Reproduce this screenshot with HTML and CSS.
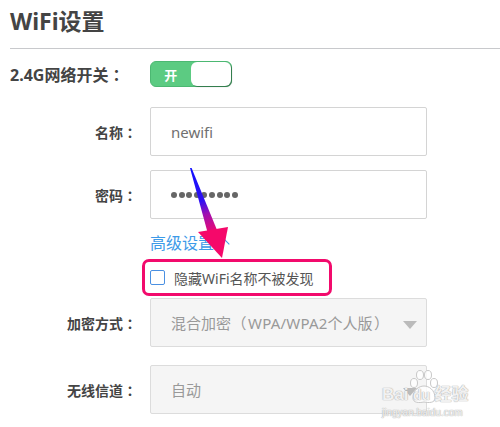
FILE: index.html
```html
<!DOCTYPE html>
<html lang="zh-CN">
<head>
<meta charset="utf-8">
<title>WiFi设置</title>
<link rel="stylesheet" href="styles.css">
</head>
<body>
<div class="page">
  <h1 class="title">WiFi设置</h1>
  <div class="row row-switch">
    <div class="label label-wide">2.4G网络开关<span class="punct" lang="zh-TW">：</span></div>
    <div class="switch"><span class="switch-on">开</span><span class="knob"></span></div>
  </div>
  <div class="row row-name">
    <div class="label">名称<span class="punct" lang="zh-TW">：</span></div>
    <div class="field">newifi</div>
  </div>
  <div class="row row-pwd">
    <div class="label">密码<span class="punct" lang="zh-TW">：</span></div>
    <div class="field"><span class="dots"><i></i><i></i><i></i><i></i><i></i><i></i><i></i><i></i><i></i></span></div>
  </div>
  <div class="row row-adv">
    <div class="label"></div>
    <a class="adv">高级设置<span class="chev"></span></a>
  </div>
  <div class="row row-hide">
    <div class="label"></div>
    <div class="highlight"><span class="check"></span><span class="hide-text">隐藏WiFi名称不被发现</span></div>
  </div>
  <div class="row row-enc">
    <div class="label">加密方式<span class="punct" lang="zh-TW">：</span></div>
    <div class="field select">混合加密<span class="paren paren-open">（</span><span class="latin">WPA/WPA2</span>个人版<span class="paren paren-close">）</span><span class="caret"></span></div>
  </div>
  <div class="row row-chan">
    <div class="label">无线信道<span class="punct" lang="zh-TW">：</span></div>
    <div class="field select">自动<span class="caret"></span></div>
  </div>

  <svg class="arrow" width="500" height="427" viewBox="0 0 500 427">
    <defs>
      <linearGradient id="g" gradientUnits="userSpaceOnUse" x1="190" y1="168" x2="214" y2="234">
        <stop offset="0" stop-color="#1010ff"/>
        <stop offset="0.5" stop-color="#3010f2"/>
        <stop offset="0.7" stop-color="#a010b0"/>
        <stop offset="1" stop-color="#f5086a"/>
      </linearGradient>
    </defs>
    <polygon points="190,168 191.6,168 217,230 208,234" fill="url(#g)"/>
    <polygon points="198,232 228,227 222,258" fill="#f5086a"/>
  </svg>

  <div class="watermark">
    <svg class="wm-paw" width="30" height="34" viewBox="0 0 30 34">
      <g fill="rgba(255,255,255,0.8)" stroke="#c8c8c8" stroke-width="1">
        <ellipse cx="5" cy="13" rx="3.5" ry="4.5"/>
        <ellipse cx="11" cy="5" rx="3.5" ry="4.5"/>
        <ellipse cx="19" cy="5" rx="3.5" ry="4.5"/>
        <ellipse cx="25" cy="13" rx="3.5" ry="4.5"/>
        <path d="M4 28 C4 20 10 16 15 16 C20 16 26 20 26 28 C26 33 20 33 15 32 C10 33 4 33 4 28 Z"/>
      </g>
    </svg>
    <span class="wm-logo">Bai<span class="wm-du">du</span>经验</span>
    <span class="wm-url">jingyan.baidu.com</span>
  </div>
</div>
</body>
</html>
```

FILE: styles.css
```css
html, body {
  margin: 0;
  padding: 0;
  background: #fff;
}
.page {
  position: relative;
  width: 500px;
  height: 427px;
  overflow: hidden;
  font-family: "Noto Sans", "Noto Sans CJK SC", sans-serif;
  color: #444;
}
.punct {
  font-family: "Noto Sans CJK TC", sans-serif;
}
.title {
  margin: 0 0 0 10px;
  padding: 6px 0 0 0;
  height: 49px;
  box-sizing: border-box;
  font-size: 23px;
  line-height: 30px;
  font-weight: bold;
  color: #444;
  border-bottom: 1px solid #c8c9cc;
}
.row {
  display: flex;
  align-items: center;
  gap: 13px;
}
.label {
  width: 137px;
  flex: none;
  text-align: right;
  font-size: 14px;
  font-weight: bold;
  color: #444;
}
.label-wide {
  text-align: left;
  padding-left: 10px;
  box-sizing: border-box;
  font-size: 16px;
  white-space: nowrap;
}
.row-switch { margin-top: 12px; height: 26px; }
.switch {
  width: 82px;
  height: 26px;
  box-sizing: border-box;
  border-radius: 6px;
  background: #5ccb82;
  border: 1px solid #4cb872;
  display: flex;
  align-items: center;
}
.switch-on {
  width: 40px;
  text-align: center;
  color: #fff;
  font-size: 13px;
  font-weight: bold;
}
.knob {
  margin-left: auto;
  width: 41px;
  height: 24px;
  background: #fff;
  border-radius: 6px;
  box-shadow: 1px 1px 1px rgba(0,0,0,0.35);
}
.field {
  width: 277px;
  height: 49px;
  box-sizing: border-box;
  border: 1px solid #d4d4d4;
  border-radius: 2px;
  padding-left: 20px;
  display: flex;
  align-items: center;
  font-size: 15px;
  color: #707070;
  background: #fff;
  white-space: nowrap;
}
.row-name { margin-top: 20px; }
.row-pwd { margin-top: 14px; }
.dots { display: flex; gap: 1.6px; }
.dots i {
  width: 6px;
  height: 6px;
  border-radius: 50%;
  background: #666;
  display: block;
}
.row-adv { margin-top: 10px; height: 26px; }
.adv {
  font-size: 16px;
  color: #3d9ae8;
  display: flex;
  align-items: center;
}
.chev {
  width: 7px;
  height: 7px;
  border-left: 1.5px solid #3d9ae8;
  border-top: 1.5px solid #3d9ae8;
  transform: rotate(45deg);
  margin-left: 6px;
  margin-top: 4px;
}
.row-hide { margin-top: 4px; gap: 5px; }
.highlight {
  width: 190px;
  height: 37px;
  box-sizing: border-box;
  border: 3px solid #f20a6c;
  border-radius: 7px;
  display: flex;
  align-items: center;
  padding-left: 5px;
  gap: 9px;
}
.check {
  width: 15px;
  height: 15px;
  box-sizing: border-box;
  border: 1px solid #4a90e2;
  border-radius: 2px;
  background: #fff;
}
.hide-text {
  font-size: 14px;
  color: #555;
}
.select {
  background: #f5f5f5;
  border-color: #dcdcdc;
  color: #999;
  font-size: 15px;
  position: relative;
}
.paren {
  display: inline-block;
  width: 16px;
  text-align: center;
}
.paren-open { margin-right: 1px; }
.paren-close { margin-left: 1px; }
.latin {
  letter-spacing: 0.2px;
}
.row-enc { margin-top: 2px; }
.row-chan { margin-top: 18px; }
.caret {
  position: absolute;
  right: 9px;
  top: 22px;
  width: 0;
  height: 0;
  border-left: 7px solid transparent;
  border-right: 7px solid transparent;
  border-top: 8px solid #bbb;
}
.arrow {
  position: absolute;
  left: 0;
  top: 0;
  pointer-events: none;
}
.watermark {
  position: absolute;
  left: 382px;
  top: 370px;
  width: 118px;
  height: 57px;
  color: rgba(255,255,255,0.85);
  text-shadow: 0 0 1px #aaa, 0 0 1px #aaa;
  font-family: "Liberation Sans", "Noto Sans CJK SC", sans-serif;
}
.wm-paw {
  position: absolute;
  left: 27px;
  top: 0;
}
.wm-logo {
  position: absolute;
  left: 0;
  top: 15px;
  font-size: 17px;
  font-weight: bold;
  line-height: 20px;
  white-space: nowrap;
}
.wm-du {
  display: inline-block;
  width: 26px;
  text-align: center;
  font-size: 14px;
}
.wm-url {
  position: absolute;
  left: 0;
  top: 37px;
  font-size: 10px;
  line-height: 12px;
  white-space: nowrap;
}
```
